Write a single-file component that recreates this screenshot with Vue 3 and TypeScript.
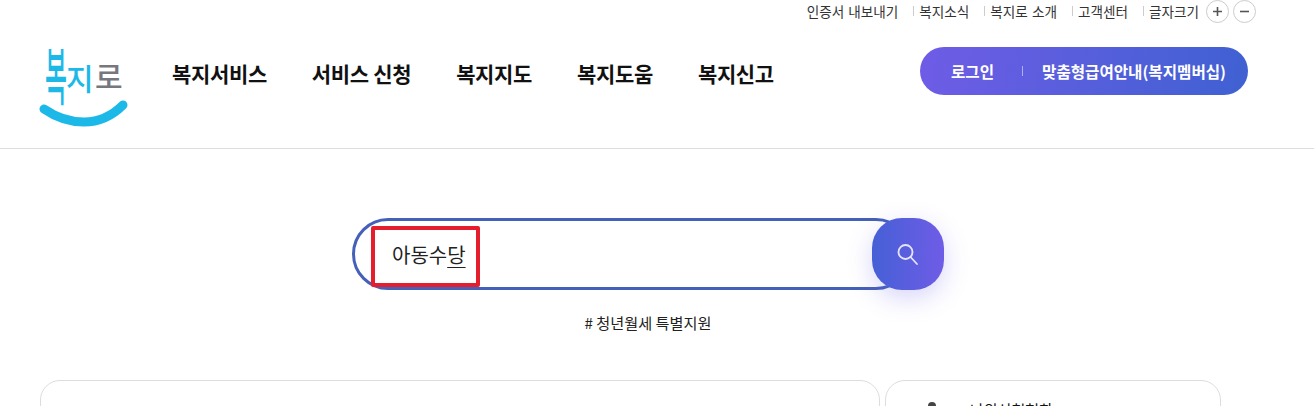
<script setup lang="ts">
const utilLinks: string[] = ['인증서 내보내기', '복지소식', '복지로 소개', '고객센터']
const navItems: string[] = ['복지서비스', '서비스 신청', '복지지도', '복지도움', '복지신고']
</script>

<template>
  <div class="page">
    <header class="header">
      <div class="util">
        <a v-for="(link, i) in utilLinks" :key="link" class="util-link" :class="{ 'util-link--first': i === 0 }">{{ link }}</a>
        <span class="util-link util-size">글자크기</span>
        <button class="size-btn" type="button" aria-label="글자 크게">
          <svg width="11" height="11" viewBox="0 0 11 11"><path d="M5.5 1v9M1 5.5h9" stroke="#555" stroke-width="1.6" /></svg>
        </button>
        <button class="size-btn" type="button" aria-label="글자 작게">
          <svg width="11" height="11" viewBox="0 0 11 11"><path d="M1 5.5h9" stroke="#555" stroke-width="1.6" /></svg>
        </button>
      </div>
      <div class="main-row">
        <a class="logo" aria-label="복지로">
          <svg width="92" height="84" viewBox="0 0 92 84">
            <text class="logo-text" fill="#1cb9e8" font-size="26" transform="translate(7 54) scale(.92 2.4)">복</text>
            <text class="logo-text" fill="#1cb9e8" font-size="30" x="28" y="44">지</text>
            <text class="logo-text" fill="#77777f" font-size="30" x="57" y="42">로</text>
            <path d="M6 63C22 74 35 76 46 76C60 76 74 70 85 59" fill="none" stroke="#1cb9e8" stroke-width="9" stroke-linecap="round" />
          </svg>
        </a>
        <nav class="nav">
          <a v-for="item in navItems" :key="item" class="nav-item">{{ item }}</a>
        </nav>
        <div class="member">
          <a class="member-login">로그인</a>
          <span class="member-sep"></span>
          <a class="member-guide">맞춤형급여안내(복지멤버십)</a>
        </div>
      </div>
    </header>

    <main class="content">
      <div class="search">
        <div class="search-box">
          <div class="search-mark">
            <span class="search-text">아동수<u>당</u></span>
          </div>
        </div>
        <button class="search-btn" type="button" aria-label="검색">
          <svg width="24" height="24" viewBox="0 0 24 24" fill="none" stroke="#e6e4fb" stroke-width="1.8" stroke-linecap="round">
            <circle cx="9.5" cy="10" r="7" />
            <path d="M14.5 15l6.5 7" />
          </svg>
        </button>
      </div>
      <p class="tag"># 청년월세 특별지원</p>
      <div class="cards">
        <section class="card card--wide"></section>
        <section class="card card--side">
          <div class="side-title">
            <svg width="14" height="16" viewBox="0 0 14 16"><circle cx="7" cy="4" r="4" fill="#444" /><path d="M0 16c0-5 3-7 7-7s7 2 7 7z" fill="#444" /></svg>
            <span>나의신청현황</span>
          </div>
        </section>
      </div>
    </main>
  </div>
</template>

<style>
html,
body {
  margin: 0;
  background: #fff;
  overflow: hidden;
}
</style>

<style scoped>
.page {
  width: 1314px;
  height: 406px;
  overflow: hidden;
  font-family: "Noto Sans CJK KR", "Noto Sans", sans-serif;
  color: #111;
}

.header {
  height: 148px;
  border-bottom: 1px solid #ddd;
}

.util {
  display: flex;
  align-items: center;
  justify-content: flex-end;
  height: 23px;
  padding-right: 58px;
  font-size: 13.6px;
  word-spacing: 1px;
  color: #333;
}

.util-link {
  position: relative;
  margin-left: 21px;
  line-height: 23px;
  white-space: nowrap;
}

.util-link--first {
  margin-left: 0;
}

.util-link:not(.util-link--first)::before {
  content: "";
  position: absolute;
  left: -6px;
  top: 6px;
  width: 1px;
  height: 10px;
  background: #ccc;
}

.size-btn {
  display: flex;
  align-items: center;
  justify-content: center;
  width: 23px;
  height: 23px;
  margin-left: 7px;
  padding: 0;
  border: 1px solid #ccc;
  border-radius: 50%;
  background: #fff;
}

.size-btn + .size-btn {
  margin-left: 4px;
}

.main-row {
  display: flex;
  align-items: flex-start;
  height: 125px;
  padding: 0 66px 0 38px;
}

.logo {
  display: block;
  width: 92px;
  height: 84px;
  margin-top: 23px;
}

.logo svg {
  display: block;
}

.logo-text {
  font-family: "Noto Sans CJK KR", sans-serif;
  font-weight: 500;
}

.nav {
  display: flex;
  gap: 45px;
  margin-top: 35px;
  margin-left: 42px;
  font-size: 21px;
  font-weight: 700;
  line-height: 30px;
  letter-spacing: -0.35px;
  color: #111;
}

.nav-item {
  white-space: nowrap;
}

.member {
  display: flex;
  align-items: center;
  height: 48px;
  margin-top: 24px;
  margin-left: auto;
  padding: 0 22px 0 31px;
  border-radius: 24px;
  background: linear-gradient(100deg, #6f5ce6, #3f61d2);
  color: #fff;
  font-size: 15.6px;
  font-weight: 700;
  white-space: nowrap;
}

.member-sep {
  width: 1px;
  height: 10px;
  margin: 0 19px 0 28px;
  background: rgba(255, 255, 255, 0.5);
}

.content {
  display: flex;
  flex-direction: column;
  align-items: center;
  width: 1296px;
}

.search {
  display: flex;
  width: 592px;
  height: 72px;
  margin-top: 69px;
}

.search-box {
  box-sizing: border-box;
  flex: 1;
  height: 72px;
  margin-right: -40px;
  padding: 5px 0 0 16px;
  border: 3px solid #4560b8;
  border-radius: 36px;
}

.search-mark {
  box-sizing: border-box;
  display: flex;
  align-items: center;
  width: 109px;
  height: 61px;
  padding: 0 0 5px 17px;
  border: 4px solid #e41e2c;
  border-radius: 2px;
}

.search-text {
  font-size: 20px;
  color: #222;
}

.search-text u {
  text-decoration-thickness: 1px;
  text-underline-offset: 4px;
}

.search-btn {
  display: flex;
  align-items: center;
  justify-content: center;
  position: relative;
  width: 72px;
  height: 72px;
  padding: 0;
  border: 0;
  border-radius: 30px;
  background: linear-gradient(90deg, #4560d6, #6f5ce6);
  box-shadow: 0 8px 24px rgba(100, 90, 230, 0.25);
}

.tag {
  margin: 22px 0 0;
  font-size: 15.2px;
  line-height: 20px;
  color: #222;
}

.cards {
  display: flex;
  gap: 5px;
  align-self: flex-start;
  margin-top: 48px;
  margin-left: 40px;
}

.card {
  box-sizing: border-box;
  flex: none;
  height: 200px;
  border: 1px solid #ddd;
  border-radius: 20px;
}

.card--wide {
  width: 840px;
}

.card--side {
  width: 336px;
  padding: 21px 0 0 39px;
}

.side-title {
  display: flex;
  align-items: center;
  gap: 31px;
  font-size: 15px;
  line-height: 16px;
}
</style>
